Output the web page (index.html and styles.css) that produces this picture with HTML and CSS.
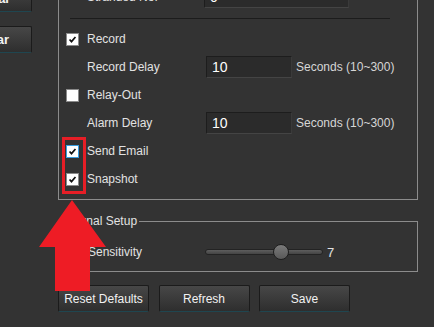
FILE: index.html
```html
<!DOCTYPE html>
<html lang="en">
<head>
  <meta charset="UTF-8">
  <title>Alarm Linkage</title>
  <link rel="stylesheet" href="styles.css">
</head>
<body>
  <div class="screen">
    <div class="side">
      <button class="btn side-btn">Manual</button>
      <button class="btn side-btn">Clear</button>
    </div>

    <div class="main">
      <div class="panel">
        <div class="row indent">
          <span class="label">Stranded No.</span>
          <input class="field wide" type="text" value="0">
        </div>
        <div class="sep"></div>

        <div class="row">
          <span class="check on"><svg viewBox="0 0 13 13"><path d="M3 6.5 L5.3 9 L10 3.6"/></svg></span>
          <span>Record</span>
        </div>
        <div class="row indent">
          <span class="label">Record Delay</span>
          <input class="field" type="text" value="10">
          <span class="unit">Seconds (10~300)</span>
        </div>
        <div class="row">
          <span class="check"></span>
          <span>Relay-Out</span>
        </div>
        <div class="row indent">
          <span class="label">Alarm Delay</span>
          <input class="field" type="text" value="10">
          <span class="unit">Seconds (10~300)</span>
        </div>
        <div class="row">
          <span class="check on focus"><svg viewBox="0 0 13 13"><path d="M3 6.5 L5.3 9 L10 3.6"/></svg></span>
          <span>Send Email</span>
        </div>
        <div class="row">
          <span class="check on"><svg viewBox="0 0 13 13"><path d="M3 6.5 L5.3 9 L10 3.6"/></svg></span>
          <span>Snapshot</span>
        </div>
      </div>

      <fieldset class="group">
        <legend>Signal Setup</legend>
        <div class="row sens">
          <span class="label">Sensitivity</span>
          <input class="slider" type="range" min="1" max="10" value="7">
          <span class="val">7</span>
        </div>
      </fieldset>

      <div class="actions">
        <button class="btn">Reset Defaults</button>
        <button class="btn">Refresh</button>
        <button class="btn">Save</button>
      </div>
    </div>
  </div>

  <!-- annotation: highlight + arrow -->
  <div class="mark"></div>
  <svg class="arrow" width="434" height="327" viewBox="0 0 434 327">
    <polygon points="72,200 39,247 55,247 55,291 90,291 90,247 106,247"/>
  </svg>
</body>
</html>
```

FILE: styles.css
```css
body {
  margin: 0;
  background: #333333;
  font-family: "Liberation Sans", Arial, sans-serif;
  font-size: 12px;
  color: #e2e2e2;
  overflow: hidden;
}

.screen {
  display: flex;
  margin-top: -20px;
}

.side {
  width: 32px;
  display: flex;
  flex-direction: column;
  gap: 14px;
  padding-top: 5px;
}

.main {
  width: 360px;
  margin-left: 26px;
}

/* buttons */
.btn {
  width: 91px;
  height: 27px;
  padding: 0;
  border: 1px solid #1b1b1b;
  border-bottom-color: #1f4650;
  border-radius: 2px;
  background: linear-gradient(#474747, #2e2e2e);
  color: #f2f2f2;
  font-family: "Liberation Sans", Arial, sans-serif;
  font-size: 12px;
}

.side-btn {
  width: 72px;
  margin-left: -40px;
  font-size: 13px;
  font-weight: bold;
  text-align: right;
  padding-right: 22px;
}

/* first panel */
.panel {
  border: 1px solid #8c8c8c;
  padding: 2px 7px 6px;
}

.row {
  height: 28px;
  display: flex;
  align-items: center;
}

.indent {
  padding-left: 21px;
}

.label {
  width: 119px;
  flex-shrink: 0;
}

.sep {
  height: 1px;
  width: 320px;
  margin: 7px 0 6px 4px;
  background: #1c1c1c;
}

.check {
  width: 11px;
  height: 11px;
  border: 1px solid #8a8a8a;
  background: #ffffff;
  margin-right: 8px;
  display: flex;
}

.check svg {
  width: 11px;
  height: 11px;
}

.check path {
  fill: none;
  stroke: #111;
  stroke-width: 2;
}

.check.focus {
  border-color: #3a9ee0;
}

.field {
  width: 86px;
  height: 22px;
  box-sizing: border-box;
  padding: 0 5px;
  border: 1px solid #1d1d1d;
  border-bottom-color: #444;
  border-right-color: #3a3a3a;
  background: #2b2b2b;
  color: #ffffff;
  font-family: "Liberation Sans", Arial, sans-serif;
  font-size: 14px;
}

.field.wide {
  width: 145px;
  margin-left: -2px;
}

.unit {
  margin-left: 4px;
  color: #d6d6d6;
}

/* signal group */
.group {
  margin: 14px 0 0;
  padding: 10px 8px 5px;
  border: 1px solid #8c8c8c;
  min-inline-size: 0;
}

.group legend {
  padding: 0 2px;
  line-height: 14px;
}

.sens {
  padding-left: 21px;
}

.sens .label {
  width: 117px;
}

.slider {
  -webkit-appearance: none;
  appearance: none;
  width: 118px;
  height: 16px;
  margin: 0;
  background: transparent;
}

.slider::-webkit-slider-runnable-track {
  height: 6px;
  border: 1px solid #232323;
  border-radius: 4px;
  background: linear-gradient(#5e5e5e, #444);
}

.slider::-webkit-slider-thumb {
  -webkit-appearance: none;
  width: 16px;
  height: 16px;
  margin-top: -6px;
  border: 1px solid #1e1e1e;
  border-radius: 50%;
  background: linear-gradient(#7a7a7a, #595959);
  box-sizing: border-box;
}

.val {
  margin-left: 4px;
  font-size: 13px;
}

.actions {
  display: flex;
  gap: 9.5px;
  margin-top: 13px;
}

/* annotation overlay */
.mark {
  position: absolute;
  left: 62px;
  top: 137px;
  width: 18px;
  height: 51px;
  border: 3px solid #e61e26;
}

.arrow {
  position: absolute;
  left: 0;
  top: 0;
}

.arrow polygon {
  fill: #ee1c25;
}
```
